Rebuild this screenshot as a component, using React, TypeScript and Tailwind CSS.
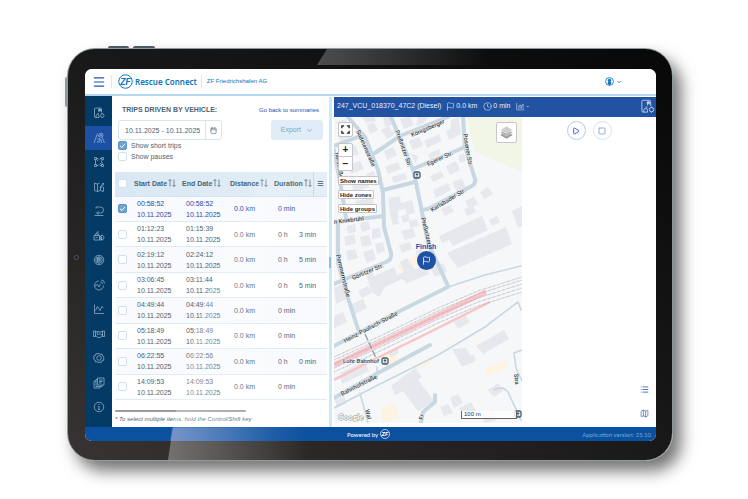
import type { ReactNode } from 'react';
import { Calendar, ChevronDown, Clock, Flag, List, Map as MapIcon, Menu, Play, Square } from 'lucide-react';

interface Trip {
    start: string;
    end: string;
    hours?: string;
    minutes: string;
    selected?: boolean;
}

interface SideItem {
    label: string;
    icon: ReactNode;
    active?: boolean;
}

const trips: Trip[] = [
    { start: '00:58:52', end: '00:58:52', minutes: '0 min', selected: true },
    { start: '01:12:23', end: '01:15:39', hours: '0 h', minutes: '3 min' },
    { start: '02:19:12', end: '02:24:12', hours: '0 h', minutes: '5 min' },
    { start: '03:06:45', end: '03:11:44', hours: '0 h', minutes: '5 min' },
    { start: '04:49:44', end: '04:49:44', minutes: '0 min' },
    { start: '05:18:49', end: '05:18:49', minutes: '0 min' },
    { start: '06:22:55', end: '06:22:56', hours: '0 h', minutes: '0 min' },
    { start: '14:09:53', end: '14:09:53', minutes: '0 min' },
];

const day = '10.11.2025';

function VehicleIcon() {
    return (
        <>
            <path d="M12 21H5a2 2 0 0 1-2-2V4a2 2 0 0 1 2-2h10a2 2 0 0 1 2 2v7M6 21v-3a3 3 0 0 1 6 0v3M12 13h-3" />
            <path d="M12 5v5M12 5h4v4" />
            <circle cx="13" cy="6" r="1.8" fill="currentColor" />
            <circle cx="18.5" cy="17" r="3.5" />
            <path d="M18.5 12v2M18.5 20v2" />
        </>
    );
}

const sideItems: SideItem[] = [
    { label: 'Vehicles', icon: <VehicleIcon /> },
    {
        label: 'Trips',
        active: true,
        icon: (
            <>
                <path d="M9 3 2 22M11 6v3M10 12v3M9 18v3M18 11l5 11M13 12l-1 10M15 14l3 8" />
                <circle cx="16" cy="6.5" r="4" />
                <circle cx="16" cy="6.5" r="1.2" />
            </>
        ),
    },
    {
        label: 'Zones',
        icon: (
            <>
                <path d="M7 5h3l2 2 2-2h3M5 7v10M19 7l-2 4 2 6M7 19h3l2-2 2 2h3M7 7l3 3M17 17l-3-3" />
                <path d="M3 3h4v4H3zM17 3h4v4h-4zM3 17h4v4H3zM17 17h4v4h-4z" />
            </>
        ),
    },
    {
        label: 'Routes',
        icon: <path d="M13 4 9 6 3 4v15l6 2 6-2 6 2v-9M9 6v15M15 19v-6M15 12l5-8 2 2-5 7-3 1z" />,
    },
    {
        label: 'Tours',
        icon: <path d="M6 4h9a6 6 0 0 1 0 12H9M3 21h18M6 4v3M11 13l-4 3 4 3" />,
    },
    {
        label: 'Cargo',
        icon: (
            <>
                <path d="M2 11h11v9H2zM5 11V8h6v3M8 8V4h4M13 14h4v6h-4M5 15h4" />
                <circle cx="18" cy="15" r="4" />
                <path d="M18 9v2M18 19v2" />
            </>
        ),
    },
    {
        label: 'Tyres',
        icon: (
            <>
                <circle cx="12" cy="12" r="9.5" />
                <circle cx="12" cy="12" r="6.5" />
                <path d="M9 7v10M12 7v10M9 8h5v8M9 12h6" />
            </>
        ),
    },
    {
        label: 'Performance',
        icon: (
            <>
                <path d="M12 4a9 9 0 1 0 9 9M4 14l5-3 3 5 3-6" />
                <path d="M15 6a4 4 0 0 1 4 4M16 2a7 7 0 0 1 7 7" />
            </>
        ),
    },
    { label: 'Reports', icon: <path d="M3 3v18h19M5 15l4-8 5 8 4-8 3 3" /> },
    {
        label: 'Partners',
        icon: <path d="M1 6h4v11H1zM19 6h4v11h-4zM5 8l5-1 4 1 5-1M5 15l5 4h4l5-4M10 8l-2 4 3 1 3-2 5 4" />,
    },
    {
        label: 'Settings',
        icon: (
            <>
                <path d="m12 2 2 3 4-1 1 4 3 2-1 3 1 3-4 1-1 4-4-1-2 2-2-3-4 1-1-4-3-2 1-3-1-3 4-1 1-4 4 1z" />
                <circle cx="12" cy="12" r="4.5" />
            </>
        ),
    },
    {
        label: 'Documents',
        icon: <path d="M9 2h13v14H9zM9 5H6v14h12v-3M6 8H2v14h12v-3M12 6h7M12 9h7M12 12h5" />,
    },
    {
        label: 'Info',
        icon: (
            <>
                <circle cx="12" cy="12" r="9.5" />
                <path d="M12 6v2M10 11h2v6M10 17h4" />
            </>
        ),
    },
];

const roads = [
    'M14 0 31 20 44 53 49 76 50 110 57 136Q58 143 52 145L21 158 0 167',
    'M57 0 74 40 80 56 87 90 94 126 114 169',
    'M41 36 66 19 114 0',
    'M0 29 24 20',
    'M79 52 131 30',
    'M129 0 131 30 141 62Q142 66 138 69L94 92 88 93',
    'M49 73 81 65',
    'M0 105 50 99',
    'M0 33 7 70 12 101',
    'M4 106V146L14 181 24 212',
    'M0 229 64 195 114 170',
    'M0 281 44 256 96 228',
    'M87 305 89 295 101 285V278',
];

const thinRoads = [
    'M114 170 151 158 187 149',
    'M0 291 44 268 104 238 151 210 184 185 187 193',
    'M26 276 34 306',
    'M160 273Q168 268 174 275L187 303',
    'M188 233 180 236 182 251 188 264',
    'M43 250V262',
];

const buildings = [
    'M49 0h8l3 7-9 3zM33 8l7-3 4 8-8 4zM47 13l8-4 5 9-7 4zM61 8l3 8-7 2z',
    'M2 5l9-3 5 7-9 5zM4 19l12-6 3 6-12 5zM28 0h12l2 4-10 2z',
    'M66 2l10-3 4 9-10 4zM84 0h10l-4 6-8 3zM117 3l8-3v9l-9 4zM90 24l15-7 3 7-15 7zM75 24l10-4 4 9-10 4zM112 14l14-6 1 9-12 6z',
    'M50 34l9-4 4 8-10 5zM51 50l13-5 3 7-13 5zM57 60l14-4 2 6-13 4zM76 36l8 3-2 8z',
    'M94 37l11-5 2 5-11 5zM96 59l11-5 3 6-11 5zM112 49l10-5 4 9-10 5zM99 73l15-7 3 7-15 8zM118 65l10-3 4 8-9 5zM124 39l6-3 2 8-6 2z',
    'M146 75l8-5 5 7-9 5zM131 84l9-4 4 7-9 5zM107 92l9-4 4 6-9 5zM130 92l9-3 3 6-9 4z',
    'M54 81l12-2 1 7 11-3 3 13-8 2-2-6-8 2 2 7-8 2zM67 99l7-2 2 7-7 2zM57 101l6-1 2 7-6 1z',
    'M12 32l9-4 4 9-10 4zM14 48l12-4 4 8-13 5zM17 66l15-4 3 8-15 5zM21 84l17-3 2 8-17 3zM32 57l8-3 2 6-8 3z',
    'M13 109l8-2 1 8-8 2zM26 106l8-2 3 8-9 3zM38 112l8-1 1 9-9 2zM10 120l10-3 2 9-10 3zM26 120l9-2 3 10-10 2zM41 127l8-2 2 9-8 3zM12 134l9-2 3 9-10 3zM29 135l10-3 3 10-9 4z',
    'M75 104l8-2 2 7-9 2zM67 114l12-3 3 9-11 3zM65 128l11-3 2 7-10 4zM82 134l6-2 3 9-8 3z',
    'M105 119l43-20 6 14-35 16-4-6-7 3zM155 103l8-4 3 6-8 4zM113 136l59-26 6 17-54 24zM178 94l10-5v20l-4 2zM96 151l13-5 4 9-12 5z',
    'M32 157l6-3 2 5 20-9 3 8 7-3-4-10 7-4 7 11 12-3 3 8-22 9-5-4-17 8-6 10-8-6z',
    'M24 174l10-5 4 7-10 5zM0 171l9-4 6 14-13 6zM16 188l13-6 4 9-12 6zM0 199l9-4 4 10-13 6z',
    'M120 205l11-7 5 7-12 7zM118 232l14-1 4 7 4 0 2 6-14 6zM142 229l28-16 5 9-26 15zM154 273l10-7 5 8-9 6z',
    'M57 269l24-18 7 9-4 3 16 21-16 10-15-20-8 4zM116 281l8-4 5 9-9 5zM106 290l8-3 5 9-9 3zM125 291l12-6 5 9-13 6zM147 298l12-4 4 9-12 3z',
    'M6 256l24-12 5 10-27 13zM1 283l9-4 3 7-10 5zM54 235l9-4 2 5-8 4z',
];

const labels = [
    { x: 22, y: 14, rotate: 66, text: 'Sudetenstraße' },
    { x: 61, y: 14, rotate: 70, text: 'Preßnitzer Str.' },
    { x: 78, y: 20, rotate: -23, text: 'Königsberger' },
    { x: 129, y: 17, rotate: 80, text: 'Posener Str.' },
    { x: 94, y: 49, rotate: -24, text: 'Egerer Str.' },
    { x: 98, y: 95, rotate: -31, text: 'Karlsbader Str.' },
    { x: 87, y: 101, rotate: 76, text: 'Preßnitzer' },
    { x: 0, y: 107, rotate: -7, text: 'n Kniebrühl' },
    { x: 19, y: 163, rotate: -23, text: 'Görlitzer Str.' },
    { x: 2, y: 138, rotate: 76, text: 'Pommernstraße' },
    { x: 1, y: 36, rotate: 80, text: 'nerstraße' },
    { x: 11, y: 226, rotate: -28, text: 'Heinz-Paulisch-Straße' },
    { x: 8, y: 279, rotate: -27, text: 'Bahnhofstraße' },
    { x: 31, y: 293, rotate: 76, text: 'Wal' },
    { x: 89, y: 303, rotate: -80, text: 'Fr' },
    { x: 180, y: 257, rotate: 84, text: 'Stra' },
    { x: 9, y: 246, rotate: 0, text: 'Lohr Bahnhof' },
];

function Logo({ className }: { className: string }) {
    return (
        <svg viewBox="0 0 30 30" className={className} aria-hidden="true">
            <circle cx="15" cy="15" r="13.5" fill="none" stroke="currentColor" strokeWidth="2" />
            <text x="14.5" y="21.5" textAnchor="middle" fontSize="18" fontWeight="700" fontStyle="italic" fill="currentColor" fontFamily="Roboto, sans-serif">
                ZF
            </text>
        </svg>
    );
}

function LineIcon({ className, children }: { className: string; children: ReactNode }) {
    return (
        <svg viewBox="0 0 24 24" fill="none" stroke="currentColor" strokeWidth="1.4" className={className} aria-hidden="true">
            {children}
        </svg>
    );
}

function SortIcon() {
    return (
        <svg viewBox="0 0 16 16" fill="none" stroke="currentColor" strokeWidth="1.4" className="mb-px h-2 w-2 shrink-0" aria-hidden="true">
            <path d="M4 15V1M1 4l3-3 3 3M12 1v14M9 12l3 3 3-3" />
        </svg>
    );
}

function Check({ label, checked }: { label: string; checked?: boolean }) {
    return (
        <span className="relative block h-[9px] w-[9px] shrink-0">
            <input
                type="checkbox"
                aria-label={label}
                defaultChecked={checked}
                className="peer block h-[9px] w-[9px] appearance-none rounded-[2px] border border-[#cfe1f1] bg-white checked:border-[#5a93c8] checked:bg-[#6ea2d0]"
            />
            <svg viewBox="0 0 9 9" className="pointer-events-none absolute inset-0 hidden peer-checked:block" fill="none" stroke="white" strokeWidth="1">
                <path d="m2 4.8 1.8 1.7L7 2.8" />
            </svg>
        </span>
    );
}

function TopBar() {
    return (
        <header className="flex h-[27px] shrink-0 items-center border-b-2 border-[#b3d8f0] bg-white pl-[7px] pr-[34px]">
            <button aria-label="Menu" className="text-[#1c55a8]">
                <Menu className="h-[14px] w-[14px]" strokeWidth={2} />
            </button>
            <span className="ml-[5px] h-[13px] w-px bg-[#e3e6ea]" />
            <Logo className="ml-[6px] h-[15px] w-[15px] text-[#0b74bd]" />
            <span className="ml-[2px] font-['Noto_Sans',sans-serif] text-[8px] font-semibold text-[#0b74bd]">Rescue Connect</span>
            <span className="ml-1 h-[13px] w-px bg-[#e3e6ea]" />
            <span className="ml-[5px] text-[6px] font-medium text-[#0b74bd]">ZF Friedrichshafen AG</span>
            <button aria-label="Account" className="ml-auto flex items-center gap-[2px] text-[#0b74bd]">
                <svg viewBox="0 0 16 16" className="h-[9px] w-[9px]" aria-hidden="true">
                    <circle cx="8" cy="8" r="7" fill="none" stroke="currentColor" strokeWidth="1.5" />
                    <circle cx="8" cy="6" r="3" fill="currentColor" />
                    <path d="M5 13V9h6v4l-3 1z" fill="currentColor" />
                </svg>
                <ChevronDown className="h-[6px] w-[6px]" strokeWidth={3} />
            </button>
        </header>
    );
}

function SideNav() {
    return (
        <nav className="flex w-[27px] shrink-0 flex-col justify-between bg-[#033a66] pb-2 pt-[5px]">
            {sideItems.map((item) => (
                <button
                    key={item.label}
                    aria-label={item.label}
                    className={`flex h-6 items-center justify-center ${item.active ? 'bg-[#1c50a5] text-[#a9c0e6]' : 'text-[#a5bbd0]'}`}
                >
                    <LineIcon className="h-3 w-3">{item.icon}</LineIcon>
                </button>
            ))}
        </nav>
    );
}

function TripTable() {
    return (
        <table className="h-[228px] w-full table-fixed border-collapse text-left text-[7px] leading-[11px] text-[#4c6373]">
            <colgroup>
                <col className="w-[19px]" />
                <col className="w-12" />
                <col className="w-12" />
                <col />
                <col className="w-[39px]" />
                <col className="w-[14px]" />
            </colgroup>
            <thead>
                <tr className="h-6 border-b border-[#d3e4f1] bg-gradient-to-r from-[#d9e8f4] to-[#e4eff7]">
                    <th className="p-0 pl-[3px]">
                        <Check label="Select all trips" />
                    </th>
                    {['Start Date', 'End Date', 'Distance', 'Duration'].map((title) => (
                        <th key={title} className="p-0 font-bold">
                            <span className="flex items-center gap-px whitespace-nowrap">
                                {title}
                                <SortIcon />
                            </span>
                        </th>
                    ))}
                    <th className="border-l border-[#cbd9e4] p-0">
                        <button aria-label="Columns" className="flex w-full justify-center">
                            <Menu className="h-[7px] w-[7px]" strokeWidth={3} />
                        </button>
                    </th>
                </tr>
            </thead>
            <tbody>
                {trips.map((trip) => (
                    <tr
                        key={trip.start}
                        className={`border-b border-[#dfebf4] odd:bg-[#f8fafd] ${trip.selected ? 'text-[#1f4fae]' : ''}`}
                    >
                        <td className="p-0 pl-[3px]">
                            <Check label={`Trip ${trip.start}`} checked={trip.selected} />
                        </td>
                        <td className="p-0 pl-[3px]">
                            {trip.start}
                            <br />
                            {day}
                        </td>
                        <td className="p-0 pl-1">
                            {trip.end}
                            <br />
                            {day}
                        </td>
                        <td className="p-0 pl-1">0.0 km</td>
                        <td colSpan={2} className="p-0 pl-1">
                            <span className="flex">
                                {trip.hours && <span className="w-[21px]">{trip.hours}</span>}
                                <span>{trip.minutes}</span>
                            </span>
                        </td>
                    </tr>
                ))}
            </tbody>
        </table>
    );
}

function TripPanel() {
    return (
        <section className="flex w-[216px] shrink-0 flex-col bg-white pl-[3px] pr-px pt-2 text-[7px] text-[#4c6373]">
            <div className="flex items-center justify-between pl-[7px] pr-2 leading-[10px]">
                <h1 className="font-bold">TRIPS DRIVEN BY VEHICLE:</h1>
                <a href="#summaries" className="text-[6px] font-medium text-[#1f4fae]">
                    Go back to summaries
                </a>
            </div>
            <div className="mt-[5px] flex items-center justify-between pl-[3px] pr-1">
                <div className="flex h-5 items-center rounded-[3px] border border-[#d5e6f3]">
                    <input
                        aria-label="Date range"
                        defaultValue={`${day} - ${day}`}
                        className="h-full w-[86px] bg-transparent pl-[6px] text-[7px] outline-none"
                    />
                    <button aria-label="Open calendar" className="flex h-full w-4 items-center justify-center border-l border-[#d5e6f3]">
                        <Calendar className="h-[7px] w-[7px]" strokeWidth={2} />
                    </button>
                </div>
                <button className="flex h-5 items-center gap-[5px] rounded-[3px] bg-[#e0edf6] px-[10px] text-[#8aa3b8]">
                    Export
                    <ChevronDown className="h-[7px] w-[7px]" strokeWidth={3} />
                </button>
            </div>
            <div className="pl-[3px] leading-[11px]">
                <label className="flex items-center gap-1">
                    <Check label="Show short trips" checked />
                    Show short trips
                </label>
                <label className="flex items-center gap-1">
                    <Check label="Show pauses" />
                    Show pauses
                </label>
            </div>
            <div className="mt-[10px]">
                <TripTable />
            </div>
            <div className="mt-[10px] h-[2px] w-[131px] rounded-full bg-[#9b9da0]" />
            <p className="mt-[3px] text-[6px] italic leading-[8px]">* To select multiple items, hold the Control/Shift key</p>
        </section>
    );
}

function StopIcon({ x, y }: { x: number; y: number }) {
    return (
        <g transform={`translate(${x} ${y})`}>
            <rect x="-3" y="-3" width="6" height="6" rx="1.5" fill="white" stroke="#40596a" strokeWidth="1.3" />
            <rect x="-1.3" y="-1.5" width="2.6" height="2" fill="#40596a" />
            <path d="M-1.5 2h3" stroke="#40596a" strokeWidth="0.7" />
        </g>
    );
}

function StreetMap() {
    return (
        <svg viewBox="0 0 188 306" preserveAspectRatio="xMinYMin slice" className="block h-full w-full bg-[#f6f7f8]" role="img" aria-label="Map">
            <path d="M133 0H188V55L141 35z" fill="#f1f6e6" />
            <path d="M63 148 85 137 91 144 67 156zM46 240 62 234 66 246 50 254zM78 249 98 240 100 244 82 254zM46 292 60 285 66 300 50 306zM150 252 172 243 174 250 154 259z" fill="#fbf4e3" />
            <g fill="#e6e8ee">
                {buildings.map((d) => (
                    <path key={d} d={d} />
                ))}
            </g>
            <g fill="none" stroke="#c8d8e3" strokeLinecap="round" strokeLinejoin="round">
                {roads.map((d) => (
                    <path key={d} d={d} strokeWidth="4" />
                ))}
                {thinRoads.map((d) => (
                    <path key={d} d={d} strokeWidth="1.6" />
                ))}
            </g>
            <g fill="none" stroke="#fac3c5">
                <path d="M0 248 44 227 94 203 152 175" strokeWidth="5" />
                <path d="M0 263 37 244 94 216 156 185" strokeWidth="2.5" />
            </g>
            {[0, 3, 7, 11, 15].map((offset) => (
                <g key={offset} fill="none" stroke="#b4b7c2" transform={`translate(0 ${offset})`}>
                    <path d="M0 240 44 220 104 191 144 174 188 160" strokeWidth="0.5" />
                    <path d="M0 240 44 220 104 191 144 174 188 160" strokeWidth="1.4" strokeDasharray="0.5 4.5" />
                </g>
            ))}
            <path d="M31 217 42 241" stroke="#8e9bb0" strokeWidth="1.3" strokeDasharray="7 2" />
            <g fontFamily="Roboto, sans-serif" fontSize="6" fontWeight="500" fill="#34454f" stroke="#f6f7f8" strokeWidth="0.8" paintOrder="stroke">
                {labels.map((label) => (
                    <text key={`${label.text}${label.y}`} x={label.x} y={label.y} transform={`rotate(${label.rotate} ${label.x} ${label.y})`}>
                        {label.text}
                    </text>
                ))}
            </g>
            <StopIcon x={83} y={58} />
            <StopIcon x={51} y={244} />
            <StopIcon x={184} y={297} />
            <text x="4" y="303" fontFamily="Lato, sans-serif" fontSize="8" fontWeight="700" fill="white" stroke="#8b8f94" strokeWidth="0.9" paintOrder="stroke">
                Google
            </text>
        </svg>
    );
}

const mapButton = 'flex items-center justify-center border border-[#c4c6c9] bg-white text-[#222]';

function MapView() {
    return (
        <div className="relative min-h-0 w-[188px] shrink-0 overflow-hidden">
            <div className="absolute inset-0">
                <StreetMap />
            </div>
            <div className="absolute left-1 top-[5px] flex flex-col items-start">
                <button aria-label="Full screen" className={`h-[15px] w-[15px] rounded-[2px] ${mapButton}`}>
                    <svg viewBox="0 0 20 20" className="h-[9px] w-[9px]" fill="none" stroke="currentColor" strokeWidth="3" aria-hidden="true">
                        <path d="M2 7V2h5M13 2h5v5M18 13v5h-5M7 18H2v-5" />
                    </svg>
                </button>
                <div className="mt-[6px] flex flex-col">
                    <button className={`h-[14px] w-[15px] rounded-t-[2px] text-[10px] font-bold leading-none ${mapButton}`}>+</button>
                    <button className={`h-[14px] w-[15px] rounded-b-[2px] border-t-0 text-[10px] font-bold leading-none ${mapButton}`}>−</button>
                </div>
                <div className="mt-[5px] flex flex-col items-start gap-[5px] text-[6px] font-bold leading-none">
                    <button className={`h-[9px] rounded-[1px] px-px ${mapButton}`}>Show names</button>
                    <button className={`h-[9px] rounded-[1px] px-px ${mapButton}`}>Hide zones</button>
                    <button className={`h-[9px] rounded-[1px] px-px ${mapButton}`}>Hide groups</button>
                </div>
            </div>
            <button aria-label="Layers" className={`absolute right-[5px] top-[5px] h-[21px] w-[21px] rounded-[2px] ${mapButton}`}>
                <svg viewBox="0 0 24 24" className="h-[15px] w-[15px]" aria-hidden="true">
                    <path d="m12 10 10 6-10 6-10-6z" fill="#999" />
                    <path d="m12 6 10 6-10 6-10-6z" fill="#b0b0b0" stroke="white" strokeWidth="0.5" />
                    <path d="m12 2 10 6-10 6L2 8z" fill="#cfcfcf" stroke="white" strokeWidth="0.5" />
                </svg>
            </button>
            <div className="absolute left-[82px] top-[126px] flex w-5 flex-col items-center text-[#1b4fae]">
                <span className="text-[7px] font-bold leading-[8px]">Finish</span>
                <span className="flex h-[19px] w-[19px] items-center justify-center rounded-full bg-[#1f52a4] text-white">
                    <Flag className="h-[9px] w-[9px]" strokeWidth={2} />
                </span>
            </div>
            <div className="absolute bottom-1 right-[5px] h-[8px] w-[56px] border border-t-0 border-[#666] bg-white/80 pl-[2px] text-[6px] leading-[7px] text-[#333]">
                100 m
            </div>
        </div>
    );
}

function MapPanel() {
    return (
        <section className="ml-[2px] flex min-w-0 flex-1 flex-col bg-white">
            <div className="flex h-5 shrink-0 items-center bg-[#2153a2] pb-px pl-[3px] pr-px text-[7px] text-[#e6eefb]">
                <span className="mr-[5px]">247_VCU_018370_47C2 (Diesel)</span>
                <span className="mr-[6px] flex items-center gap-px">
                    <Flag className="h-[9px] w-[9px]" strokeWidth={1.5} />
                    0.0 km
                </span>
                <span className="mr-[6px] flex items-center gap-px">
                    <Clock className="h-[9px] w-[9px]" strokeWidth={1.5} />0 min
                </span>
                <span className="flex items-center gap-px">
                    <LineIcon className="h-[9px] w-[9px]">
                        <path d="M2 2v19h20M7 18v-6M11 18V8M15 18v-7M19 18V5M6 12l5-4 4 3 4-6" />
                    </LineIcon>
                    -
                </span>
                <LineIcon className="ml-auto h-[15px] w-[15px] text-[#c3d3ec]">
                    <VehicleIcon />
                </LineIcon>
            </div>
            <div className="mb-1 flex min-h-0 flex-1">
                <MapView />
                <div className="flex min-w-0 flex-1 flex-col justify-between pb-[5px] pr-[7px] pt-1 text-[#1f4fae]">
                    <div className="flex justify-center gap-[7px] pl-[7px]">
                        <button aria-label="Play" className="flex h-[19px] w-[19px] items-center justify-center rounded-full border border-[#b4cbea]">
                            <Play className="h-2 w-2" strokeWidth={2.5} />
                        </button>
                        <button aria-label="Stop" className="flex h-[19px] w-[19px] items-center justify-center rounded-full border border-[#d6e3f3] text-[#7d9bcf]">
                            <Square className="h-2 w-2" strokeWidth={2.5} />
                        </button>
                    </div>
                    <div className="flex flex-col items-end gap-[15px] text-[#4a72bb]">
                        <button aria-label="List view">
                            <List className="h-[9px] w-[9px]" strokeWidth={2.5} />
                        </button>
                        <button aria-label="Map view">
                            <MapIcon className="h-[9px] w-[9px]" strokeWidth={2} />
                        </button>
                    </div>
                </div>
            </div>
        </section>
    );
}

function Footer() {
    return (
        <footer className="flex h-[14px] shrink-0 items-center bg-[#0c50a0] pl-[262px] pr-[5px] font-['Lato',sans-serif] text-[6px] text-white">
            Powered by
            <Logo className="ml-[2px] h-[10px] w-[10px]" />
            <span className="ml-auto text-[#6fa9dc]">Application version: 25.10</span>
        </footer>
    );
}

export default function App() {
    return (
        <div className="flex min-h-screen bg-white pb-[38px] pl-[67px] pr-[75px] pt-12 font-['Liberation_Sans',Arial,sans-serif]">
            <div className="relative flex min-w-0 flex-1 rounded-[28px] border border-[#8d9ba0] bg-gradient-to-tr from-[#383433] via-[#1a1919] to-[#080808] pb-[19px] pl-[17px] pr-4 pt-5 shadow-[8px_10px_16px_0px_rgba(0,0,0,0.55)]">
                {/* Hardware keys */}
                <span className="absolute -top-[3px] left-10 h-[2px] w-[21px] rounded-t bg-[#4c5a63]" />
                <span className="absolute -top-[3px] left-[65px] h-[2px] w-[22px] rounded-t bg-[#4c5a63]" />
                <span className="absolute -left-[3px] top-7 h-[30px] w-[2px] rounded-l bg-[#8d9ba0]" />
                {/* Camera */}
                <span className="absolute left-[6px] top-1/2 h-[5px] w-[5px] rounded-full border border-[#55565c] bg-[#1b1d2b]" />

                <div className="flex min-w-0 flex-1 flex-col overflow-hidden rounded-[7px] bg-white">
                    <TopBar />
                    <div className="flex min-h-0 flex-1">
                        <SideNav />
                        <div className="flex min-w-0 flex-1 pt-px">
                            <TripPanel />
                            <div className="ml-px flex w-[3px] shrink-0 items-center bg-[#cbe9f8]">
                                <span className="h-[11px] w-[2px] bg-[#8fbfe6]" />
                            </div>
                            <MapPanel />
                        </div>
                    </div>
                    <Footer />
                </div>

                {/* Glare across the glass */}
                <svg viewBox="0 0 604 411" preserveAspectRatio="none" className="pointer-events-none absolute inset-0 h-full w-full" aria-hidden="true">
                    <defs>
                        <linearGradient id="glare" gradientUnits="userSpaceOnUse" x1="100" y1="0" x2="240" y2="0">
                            <stop offset="0" stopColor="white" stopOpacity="0.32" />
                            <stop offset="1" stopColor="white" stopOpacity="0" />
                        </linearGradient>
                        <linearGradient id="glareFoot" gradientUnits="userSpaceOnUse" x1="100" y1="0" x2="200" y2="0">
                            <stop offset="0" stopColor="#f0c8ff" stopOpacity="0.2" />
                            <stop offset="1" stopColor="#f0c8ff" stopOpacity="0" />
                        </linearGradient>
                        <linearGradient id="glareEdge" gradientUnits="userSpaceOnUse" x1="250" y1="0" x2="420" y2="0">
                            <stop offset="0" stopColor="white" stopOpacity="0.25" />
                            <stop offset="1" stopColor="white" stopOpacity="0" />
                        </linearGradient>
                    </defs>
                    <path d="M192 130Q120 260 100 411H330L380 130z" fill="url(#glare)" />
                    <path d="M104 379 102 392H250V379z" fill="url(#glareFoot)" />
                    <path d="M259 0 249 16H440V0z" fill="url(#glareEdge)" />
                </svg>
            </div>
        </div>
    );
}
